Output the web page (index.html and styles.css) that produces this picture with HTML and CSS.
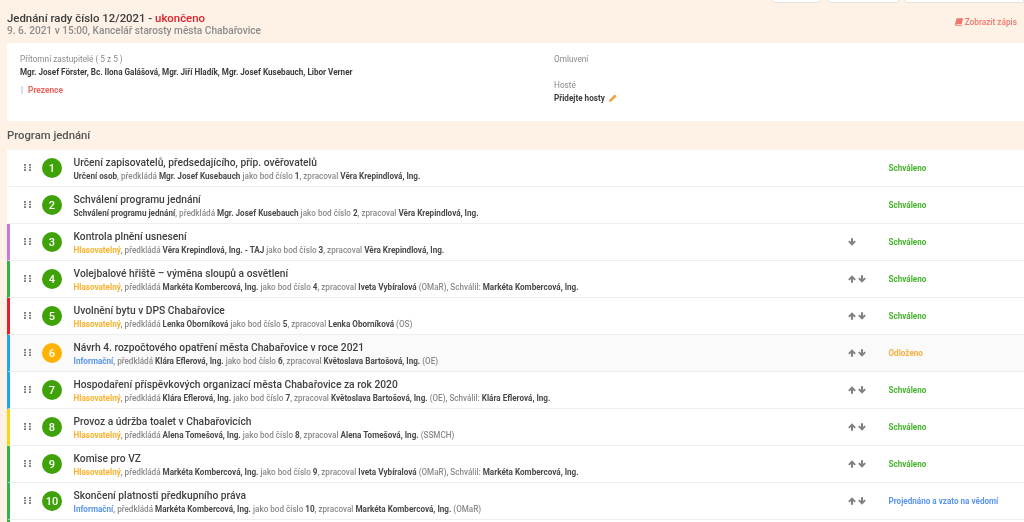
FILE: index.html
```html
<!DOCTYPE html>
<html lang="cs">
<head>
<meta charset="utf-8">
<title>Jednání rady</title>
<link rel="stylesheet" href="styles.css">
</head>
<body>
<svg class="defs" width="0" height="0" aria-hidden="true">
  <symbol id="grip" viewBox="0 0 7 7"><path d="M0 0h2v1.700H0zM5 0h2v1.700H5zM0 2.650h2v1.700H0zM5 2.650h2v1.700H5zM0 5.300h2V7H0zM5 5.300h2V7H5z"/></symbol>
  <symbol id="up" viewBox="0 0 10 10"><path d="M5 .4L9.800 5.200 8.200 6.800 6.300 4.900V9.600H3.700V4.900L1.800 6.800 .2 5.200Z"/></symbol>
  <symbol id="down" viewBox="0 0 10 10"><path d="M5 9.600L.2 4.800 1.800 3.200 3.700 5.100V.4H6.300V5.100L8.200 3.200 9.800 4.800Z"/></symbol>
</svg>
<div class="topbtns">
  <span class="tb tb1"></span><span class="tb tb2"></span><span class="tb tb3"></span>
</div>
<header class="head">
  <div>
    <h1>Jednání rady číslo 12/2021 - <span class="red">ukončeno</span></h1>
    <div class="sub">9. 6. 2021 v 15:00, Kancelář starosty města Chabařovice</div>
  </div>
  <a class="zapis"><svg width="8" height="8" viewBox="0 0 10 10"><path d="M2.200 0.300H10L8.300 7.700H2C.9 7.700.9 8.800 2 8.800H8.600V9.800H1.500C0 9.800-.3 8.500.1 7.200Z" fill="#f0766d"/></svg>Zobrazit zápis</a>
</header>
<section class="panel">
  <div class="col-l">
    <div class="lbl">Přítomní zastupitelé ( 5 z 5 )</div>
    <div class="names">Mgr. Josef Förster, Bc. Ilona Galášová, Mgr. Jiří Hladík, Mgr. Josef Kusebauch, Libor Verner</div>
    <div class="prez"><span class="bar">|</span><span class="prez-t">Prezence</span></div>
  </div>
  <div class="col-r">
    <div class="lbl">Omluvení</div>
    <div class="lbl host">Hosté</div>
    <div class="names add">Přidejte hosty<svg width="8" height="8" viewBox="0 0 10 10"><path d="M0 10L.7 7 7.200 .5 9.500 2.800 3 9.300Z" fill="#f0a040"/></svg></div>
  </div>
</section>
<h2>Program jednání</h2>
<main class="list">
  <div class="row">
    <svg class="grip"><use href="#grip"/></svg>
    <span class="num g">1</span>
    <div class="txt"><div class="t">Určení zapisovatelů, předsedajícího, příp. ověřovatelů</div><div class="d"><b>Určení osob</b>, předkládá <b>Mgr. Josef Kusebauch</b> jako bod číslo <b>1</b>, zpracoval <b>Věra Krepindlová, Ing.</b></div></div>
    <span class="arr"></span><span class="st ok">Schváleno</span>
  </div>
  <div class="row">
    <svg class="grip"><use href="#grip"/></svg>
    <span class="num g">2</span>
    <div class="txt"><div class="t">Schválení programu jednání</div><div class="d"><b>Schválení programu jednání</b>, předkládá <b>Mgr. Josef Kusebauch</b> jako bod číslo <b>2</b>, zpracoval <b>Věra Krepindlová, Ing.</b></div></div>
    <span class="arr"></span><span class="st ok">Schváleno</span>
  </div>
  <div class="row c-purple">
    <svg class="grip"><use href="#grip"/></svg>
    <span class="num g">3</span>
    <div class="txt"><div class="t">Kontrola plnění usnesení</div><div class="d"><span class="hl">Hlasovatelný</span>, předkládá <b>Věra Krepindlová, Ing. - TAJ</b> jako bod číslo <b>3</b>, zpracoval <b>Věra Krepindlová, Ing.</b></div></div>
    <span class="arr"><svg class="a"><use href="#down"/></svg></span><span class="st ok">Schváleno</span>
  </div>
  <div class="row c-green">
    <svg class="grip"><use href="#grip"/></svg>
    <span class="num g">4</span>
    <div class="txt"><div class="t">Volejbalové hřiště – výměna sloupů a osvětlení</div><div class="d"><span class="hl">Hlasovatelný</span>, předkládá <b>Markéta Kombercová, Ing.</b> jako bod číslo <b>4</b>, zpracoval <b>Iveta Vybíralová</b> (OMaR), Schválil: <b>Markéta Kombercová, Ing.</b></div></div>
    <span class="arr"><svg class="a"><use href="#up"/></svg><svg class="a"><use href="#down"/></svg></span><span class="st ok">Schváleno</span>
  </div>
  <div class="row c-red">
    <svg class="grip"><use href="#grip"/></svg>
    <span class="num g">5</span>
    <div class="txt"><div class="t">Uvolnění bytu v DPS Chabařovice</div><div class="d"><span class="hl">Hlasovatelný</span>, předkládá <b>Lenka Oborníková</b> jako bod číslo <b>5</b>, zpracoval <b>Lenka Oborníková</b> (OS)</div></div>
    <span class="arr"><svg class="a"><use href="#up"/></svg><svg class="a"><use href="#down"/></svg></span><span class="st ok">Schváleno</span>
  </div>
  <div class="row c-blue hover">
    <svg class="grip"><use href="#grip"/></svg>
    <span class="num o">6</span>
    <div class="txt"><div class="t">Návrh 4. rozpočtového opatření města Chabařovice v roce 2021</div><div class="d"><span class="inf">Informační</span>, předkládá <b>Klára Eflerová, Ing.</b> jako bod číslo <b>6</b>, zpracoval <b>Květoslava Bartošová, Ing.</b> (OE)</div></div>
    <span class="arr"><svg class="a"><use href="#up"/></svg><svg class="a"><use href="#down"/></svg></span><span class="st warn">Odloženo</span>
  </div>
  <div class="row c-blue">
    <svg class="grip"><use href="#grip"/></svg>
    <span class="num g">7</span>
    <div class="txt"><div class="t">Hospodaření příspěvkových organizací města Chabařovice za rok 2020</div><div class="d"><span class="hl">Hlasovatelný</span>, předkládá <b>Klára Eflerová, Ing.</b> jako bod číslo <b>7</b>, zpracoval <b>Květoslava Bartošová, Ing.</b> (OE), Schválil: <b>Klára Eflerová, Ing.</b></div></div>
    <span class="arr"><svg class="a"><use href="#up"/></svg><svg class="a"><use href="#down"/></svg></span><span class="st ok">Schváleno</span>
  </div>
  <div class="row c-yellow">
    <svg class="grip"><use href="#grip"/></svg>
    <span class="num g">8</span>
    <div class="txt"><div class="t">Provoz a údržba toalet v Chabařovicích</div><div class="d"><span class="hl">Hlasovatelný</span>, předkládá <b>Alena Tomešová, Ing.</b> jako bod číslo <b>8</b>, zpracoval <b>Alena Tomešová, Ing.</b> (SSMCH)</div></div>
    <span class="arr"><svg class="a"><use href="#up"/></svg><svg class="a"><use href="#down"/></svg></span><span class="st ok">Schváleno</span>
  </div>
  <div class="row c-green">
    <svg class="grip"><use href="#grip"/></svg>
    <span class="num g">9</span>
    <div class="txt"><div class="t">Komise pro VZ</div><div class="d"><span class="hl">Hlasovatelný</span>, předkládá <b>Markéta Kombercová, Ing.</b> jako bod číslo <b>9</b>, zpracoval <b>Iveta Vybíralová</b> (OMaR), Schválil: <b>Markéta Kombercová, Ing.</b></div></div>
    <span class="arr"><svg class="a"><use href="#up"/></svg><svg class="a"><use href="#down"/></svg></span><span class="st ok">Schváleno</span>
  </div>
  <div class="row c-green">
    <svg class="grip"><use href="#grip"/></svg>
    <span class="num g">10</span>
    <div class="txt"><div class="t">Skončení platnosti předkupního práva</div><div class="d"><span class="inf">Informační</span>, předkládá <b>Markéta Kombercová, Ing.</b> jako bod číslo <b>10</b>, zpracoval <b>Markéta Kombercová, Ing.</b> (OMaR)</div></div>
    <span class="arr"><svg class="a"><use href="#up"/></svg><svg class="a"><use href="#down"/></svg></span><span class="st info">Projednáno a vzato na vědomí</span>
  </div>
  <div class="row c-green">
    <svg class="grip"><use href="#grip"/></svg>
    <span class="num g"></span>
  </div>
</main>
</body>
</html>
```
FILE: styles.css
```css
* { box-sizing: border-box; }
html, body { margin: 0; height: 522px; overflow: hidden; }
body { background: #fdf2e5; font-family: Roboto, "Liberation Sans", sans-serif; color: #4a4a4a; filter: blur(.3px); }
.defs { display: block; height: 0; }
.topbtns { height: 3px; display: flex; justify-content: flex-end; }
.tb { display: block; height: 3px; background: #fff; border: 1px solid #e6e3df; border-top: 0; border-radius: 0 0 2px 2px; }
.tb1 { width: 48px; margin-right: 8px; }
.tb2 { width: 71px; margin-right: 6px; }
.tb3 { width: 119px; }
.head { height: 40px; padding: 9px 7px 0 7px; display: flex; justify-content: space-between; align-items: flex-start; }
h1 { margin: 0; font-size: 11.4px; line-height: 13px; font-weight: 500; color: #3c3c3c; }
.red { color: #e0202c; }
.sub { font-size: 10.12px; line-height: 12px; font-weight: 500; color: #8c8c8c; }
.zapis { margin-top: 4px; font-size: 8.3px; line-height: 12px; font-weight: 500; color: #f0766d; display: flex; align-items: center; gap: 2px; }
.panel { margin-left: 7px; height: 78px; background: #fff; display: flex; padding-top: 10px; }
.col-l { width: 534px; padding-left: 13px; }
.col-r { flex: 1; padding-left: 13px; }
.lbl { font-size: 8.25px; line-height: 12px; color: #8a8a8a; }
.names { margin-top: 1px; font-size: 8.13px; line-height: 12px; font-weight: 700; color: #3c3c3c; }
.prez { margin-top: 6px; font-size: 8.3px; line-height: 12px; padding-left: 1px; }
.bar { color: #999; margin-right: 5px; }
.prez-t { color: #f0665e; font-weight: 700; }
.host { margin-top: 14px; }
.add { display: flex; align-items: center; gap: 4px; }
h2 { margin: 0; height: 29px; padding: 8px 0 0 7px; font-size: 11.3px; line-height: 14px; font-weight: 500; color: #555; }
.list { margin-left: 7px; height: 372px; overflow: hidden; }
.row { height: 37px; background: #fff; border-bottom: 1px solid #eee; border-left: 3px solid #fff; display: flex; align-items: center; }
.row.hover { background: #fafafa; }
.c-purple { border-left-color: #c678e0; }
.c-green { border-left-color: #34b34a; }
.c-red { border-left-color: #e3202c; }
.c-blue { border-left-color: #1ea7e4; }
.c-yellow { border-left-color: #f8d516; }
.grip { width: 7px; height: 7px; margin-left: 14px; fill: #7a7a7a; flex: none; margin-top: -1px; }
.num { width: 20px; height: 20px; margin-left: 11px; border-radius: 50%; color: #fff; font-size: 11px; font-weight: 500; display: flex; align-items: center; justify-content: center; flex: none; }
.g { background: #3fa209; }
.o { background: #ffb300; }
.txt { width: 774px; margin-left: 11.5px; padding-top: 1px; flex: none; }
.t { font-size: 10.25px; line-height: 13px; font-weight: 500; color: #3f3f3f; }
.d { margin-top: 1px; font-size: 8.14px; line-height: 12px; font-weight: 500; color: #8a8a8a; white-space: nowrap; }
.d b { font-weight: 700; color: #4a4a4a; }
.hl { color: #fbb22e; font-weight: 700; }
.inf { color: #5a96ea; font-weight: 700; }
.arr { width: 41px; flex: none; display: flex; gap: 2px; }
.a { width: 8px; height: 8px; fill: #808080; }
.st { font-size: 8.15px; font-weight: 700; white-space: nowrap; }
.ok { color: #45b52d; }
.warn { color: #f5b040; }
.info { color: #5a96ea; }
```
